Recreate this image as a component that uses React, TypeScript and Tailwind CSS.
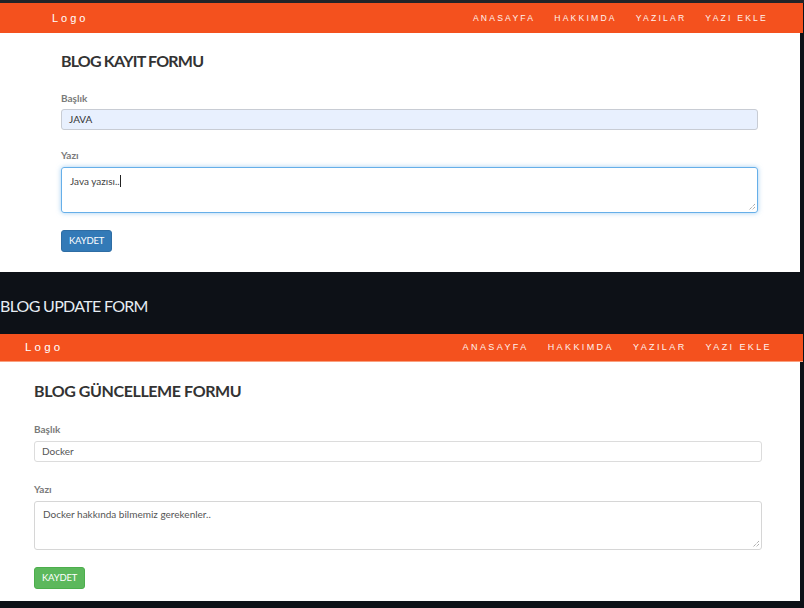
import React from "react";

const NAV_ITEMS = ["ANASAYFA", "HAKKIMDA", "YAZILAR", "YAZI EKLE"];

function Grip() {
  return (
    <svg
      className="absolute bottom-[1px] right-[1px]"
      width="8"
      height="8"
      viewBox="0 0 8 8"
    >
      <path d="M7 1 L1 7 M7 4 L4 7" stroke="#8a8a8a" strokeWidth="1" strokeDasharray="1 1" />
    </svg>
  );
}

function Navbar({ logoPad, rightPad, big }: { logoPad: string; rightPad: string; big?: boolean }) {
  return (
    <nav
      className={`flex items-center justify-between bg-[#f4511e] text-white ${
        big ? "h-[28px] border-b border-[#f9a07f]" : "h-[30px]"
      } ${logoPad} ${rightPad}`}
      style={{ fontFamily: '"Liberation Sans", Arial, sans-serif' }}
    >
      <span className={big ? "text-[11.5px] tracking-[3.2px]" : "text-[11px] tracking-[3px]"}>Logo</span>
      <ul className={`flex ${big ? "gap-[19px] text-[9px] tracking-[2.4px]" : "gap-[19px] text-[8.6px] tracking-[2.2px]"}`}>
        {NAV_ITEMS.map((item) => (
          <li key={item} className="text-[#fff3ef]">
            {item}
          </li>
        ))}
      </ul>
    </nav>
  );
}

function Screen({ variant }: { variant: "create" | "update" }) {
  const create = variant === "create";
  return (
    <section className="w-[803px]">
      <Navbar logoPad={create ? "pl-[52px]" : "pl-[25px]"} rightPad={create ? "pr-[35px]" : "pr-[31px]"} big={!create} />
      <div
        className={`w-[800px] bg-white ${create ? "h-[239px] pl-[61px] pr-[42px]" : "h-[239px] pl-[34px] pr-[38px]"}`}
        style={{ fontFamily: 'Lato, "Open Sans", sans-serif' }}
      >
        <h2
          className={`text-[16px] leading-[20px] font-bold text-[#333] ${
            create ? "pt-[18px] tracking-[-0.8px]" : "pt-[19px] tracking-[-0.4px]"
          }`}
        >
          {create ? "BLOG KAYIT FORMU" : "BLOG GÜNCELLEME FORMU"}
        </h2>

        <label className={`block text-[10px] leading-[14px] font-bold text-[#7a7a7a] ${create ? "mt-[20px] mb-[4px]" : "mt-[21px] mb-[5px]"}`}>
          Başlık
        </label>
        <div
          className={`flex h-[21px] items-center rounded-[3px] border px-[7px] text-[10px] text-[#333] ${
            create ? "border-[#c8ccd4] bg-[#e8f0fe]" : "border-[#dcdcdc] bg-white text-[#555]"
          }`}
        >
          {create ? "JAVA" : "Docker"}
        </div>

        <label className={`block text-[10px] leading-[14px] font-bold text-[#7a7a7a] mb-[5px] ${create ? "mt-[18px]" : "mt-[20px]"}`}>
          Yazı
        </label>
        <div
          className={`relative rounded-[3px] border px-[8px] pt-[5px] text-[10px] leading-[14px] ${
            create
              ? "h-[46px] border-[#66afe9] text-[#444] shadow-[0_0_5px_rgba(102,175,233,0.6)]"
              : "h-[49px] border-[#d6d6d6] text-[#555]"
          }`}
        >
          {create ? (
            <span>
              Java yazısı..<span className="inline-block h-[12px] w-px translate-y-[2px] bg-[#222]" />
            </span>
          ) : (
            "Docker hakkında bilmemiz gerekenler.."
          )}
          <Grip />
        </div>

        <button
          className={`mt-[17px] flex h-[22px] items-center rounded-[3px] border px-[7px] text-[9.5px] text-white tracking-[-0.2px] ${
            create ? "border-[#2e6da4] bg-[#337ab7]" : "border-[#4cae4c] bg-[#5cb85c]"
          }`}
        >
          KAYDET
        </button>
      </div>
    </section>
  );
}

export default function App() {
  return (
    <div className="h-[608px] w-[804px] overflow-hidden border-t-[3px] border-[#222428] bg-[#0d1117]">
      <Screen variant="create" />
      <div className="h-[62px] pt-[23px]">
        <p
          className="text-[16px] leading-[22px] text-[#e6edf3] tracking-[-0.7px]"
          style={{ fontFamily: 'Lato, "Open Sans", sans-serif' }}
        >
          BLOG UPDATE FORM
        </p>
      </div>
      <Screen variant="update" />
    </div>
  );
}
